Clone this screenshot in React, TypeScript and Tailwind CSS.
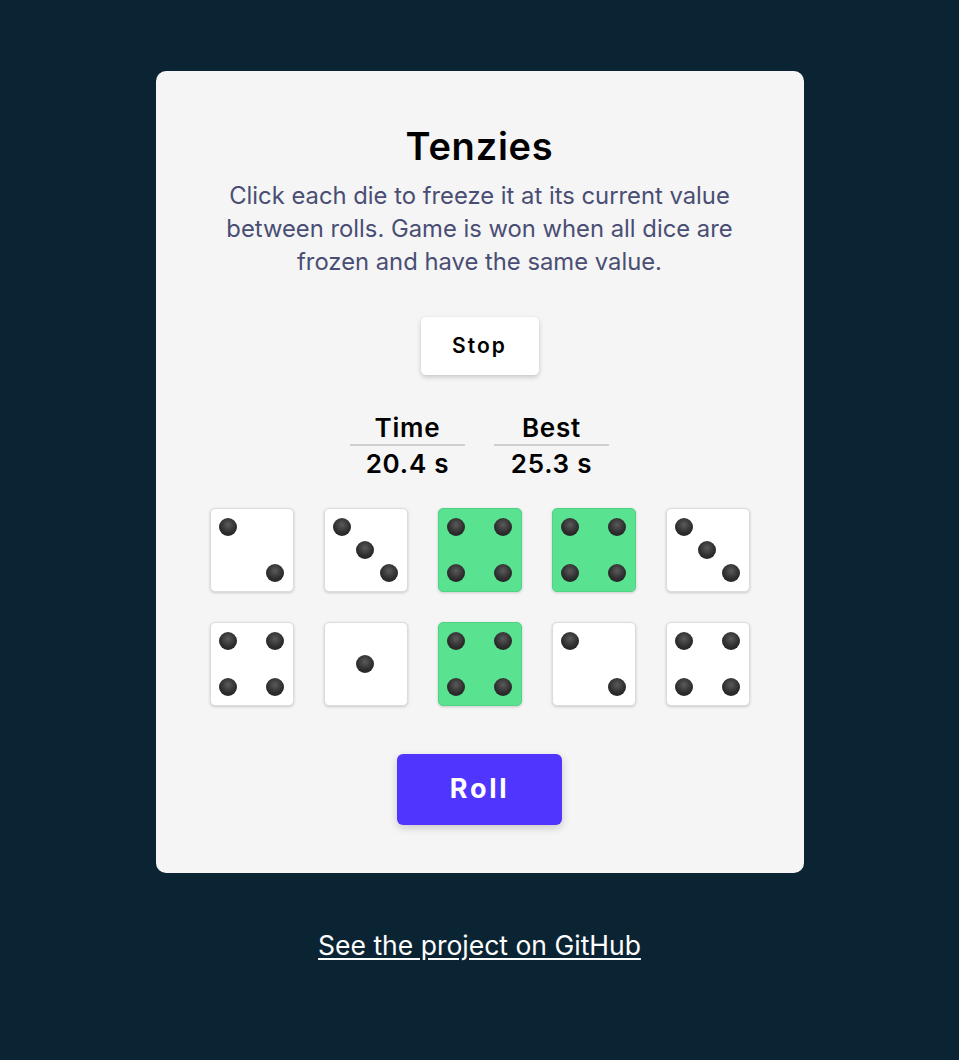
import React from 'react';

type Die = { value: number; held: boolean };

const dice: Die[] = [
  { value: 2, held: false },
  { value: 3, held: false },
  { value: 4, held: true },
  { value: 4, held: true },
  { value: 3, held: false },
  { value: 4, held: false },
  { value: 1, held: false },
  { value: 4, held: true },
  { value: 2, held: false },
  { value: 4, held: false },
];

// pip positions in a 3x3 grid, numbered 0..8 row by row
const pipMap: Record<number, number[]> = {
  1: [4],
  2: [0, 8],
  3: [0, 4, 8],
  4: [0, 2, 6, 8],
  5: [0, 2, 4, 6, 8],
  6: [0, 2, 3, 5, 6, 8],
};

const DieFace: React.FC<{ die: Die }> = ({ die }) => {
  const pips = pipMap[die.value];
  return (
    <button
      className={`grid h-[84px] w-[84px] grid-cols-3 grid-rows-3 rounded-[5px] border p-[6px] shadow-[0_1px_3px_rgba(0,0,0,0.18)] ${
        die.held ? 'border-[#4fd483] bg-[#59e391]' : 'border-[#dcdcdc] bg-white'
      }`}
    >
      {Array.from({ length: 9 }).map((_, i) => (
        <span key={i} className="flex items-center justify-center">
          {pips.includes(i) && (
            <span className="block h-[18px] w-[18px] rounded-full bg-[radial-gradient(circle_at_50%_38%,#5a5a5a_0%,#2e2e2e_55%,#1c1c1c_100%)]" />
          )}
        </span>
      ))}
    </button>
  );
};

const Stat: React.FC<{ label: string; value: string }> = ({ label, value }) => (
  <div className="flex w-[115px] flex-col items-center">
    <div className="w-full border-b-2 border-[#cfcfcf] pb-[2px] text-center text-[26px] font-semibold leading-[28px] tracking-[0.03em] text-black">
      {label}
    </div>
    <div className="mt-[4px] text-center text-[26px] font-semibold leading-[28px] tracking-[0.03em] text-black">
      {value}
    </div>
  </div>
);

export default function App() {
  return (
    <div className="flex min-h-[1060px] flex-col items-center bg-[#0b2434] font-['Inter','Noto_Sans',sans-serif]">
      <main className="mt-[71px] flex w-[648px] flex-col items-center rounded-[10px] bg-[#f5f5f5] pb-[48px] pt-[56px]">
        <h1 className="text-[38px] font-semibold leading-[38px] tracking-[0.02em] text-black">Tenzies</h1>
        <p className="mt-[14px] max-w-[540px] text-center text-[23.8px] leading-[33px] text-[#4a4e74]">
          Click each die to freeze it at its current value between rolls. Game is won when all dice are frozen and have
          the same value.
        </p>

        <button className="mt-[39px] h-[58px] w-[118px] rounded-[5px] bg-white text-[21px] font-semibold tracking-[0.1em] text-black shadow-[0_2px_5px_rgba(0,0,0,0.2)]">
          Stop
        </button>

        <div className="mt-[39px] flex gap-[29px]">
          <Stat label="Time" value="20.4 s" />
          <Stat label="Best" value="25.3 s" />
        </div>

        <div className="mt-[30px] grid grid-cols-5 gap-[30px]">
          {dice.map((d, i) => (
            <DieFace key={i} die={d} />
          ))}
        </div>

        <button className="mt-[48px] h-[71px] w-[165px] rounded-[6px] bg-[#5035ff] text-[27px] font-bold tracking-[0.1em] text-white shadow-[0_3px_8px_rgba(0,0,0,0.18)]">
          Roll
        </button>
      </main>

      <a href="#" className="mt-[57px] text-[26.5px] leading-[30px] text-white underline underline-offset-[3px]">
        See the project on GitHub
      </a>
    </div>
  );
}
